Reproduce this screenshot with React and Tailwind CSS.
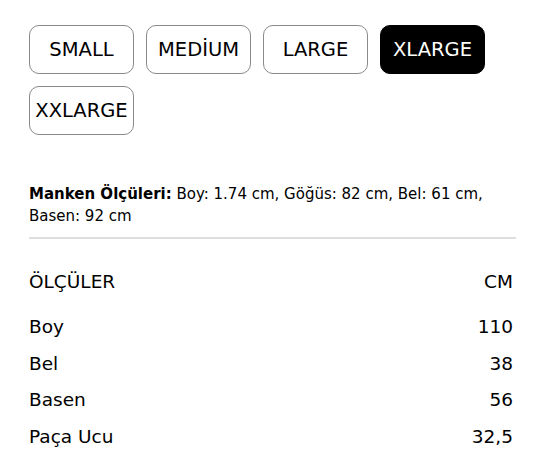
const sizes = ['SMALL', 'MEDİUM', 'LARGE', 'XLARGE', 'XXLARGE']
const selected = 'XLARGE'

const rows = [
  ['Boy', '110'],
  ['Bel', '38'],
  ['Basen', '56'],
  ['Paça Ucu', '32,5'],
]

export default function App() {
  return (
    <div
      className="w-[549px] h-[462px] bg-white pt-[25px] pl-[29px] pr-[33px] text-black overflow-hidden"
      style={{ fontFamily: '"DejaVu Sans", "Open Sans", sans-serif' }}
    >
      <div className="flex flex-wrap gap-x-3 gap-y-3">
        {sizes.map(size => (
          <button
            key={size}
            className={`w-[105px] h-[49px] rounded-[10px] border text-[19.5px] flex items-center justify-center ${
              size === selected ? 'bg-black text-white border-black' : 'bg-white border-[#8a8a8a]'
            }`}
          >
            {size}
          </button>
        ))}
      </div>

      <p className="mt-[48px] text-[15px] leading-[22px]">
        <span className="font-bold">Manken Ölçüleri:</span> Boy: 1.74 cm, Göğüs: 82 cm, Bel: 61 cm, Basen: 92 cm
      </p>

      <div className="mt-[10px] h-[2px] bg-[#dedede]" />

      <div className="mt-[31px] flex justify-between text-[18.5px] leading-[24px]">
        <span>ÖLÇÜLER</span>
        <span className="pr-[3px]">CM</span>
      </div>

      <div className="mt-[21px] flex flex-col gap-[12.5px] text-[18.5px] leading-[24px]">
        {rows.map(([name, value]) => (
          <div key={name} className="flex justify-between">
            <span>{name}</span>
            <span className="pr-[3px]">{value}</span>
          </div>
        ))}
      </div>
    </div>
  )
}
